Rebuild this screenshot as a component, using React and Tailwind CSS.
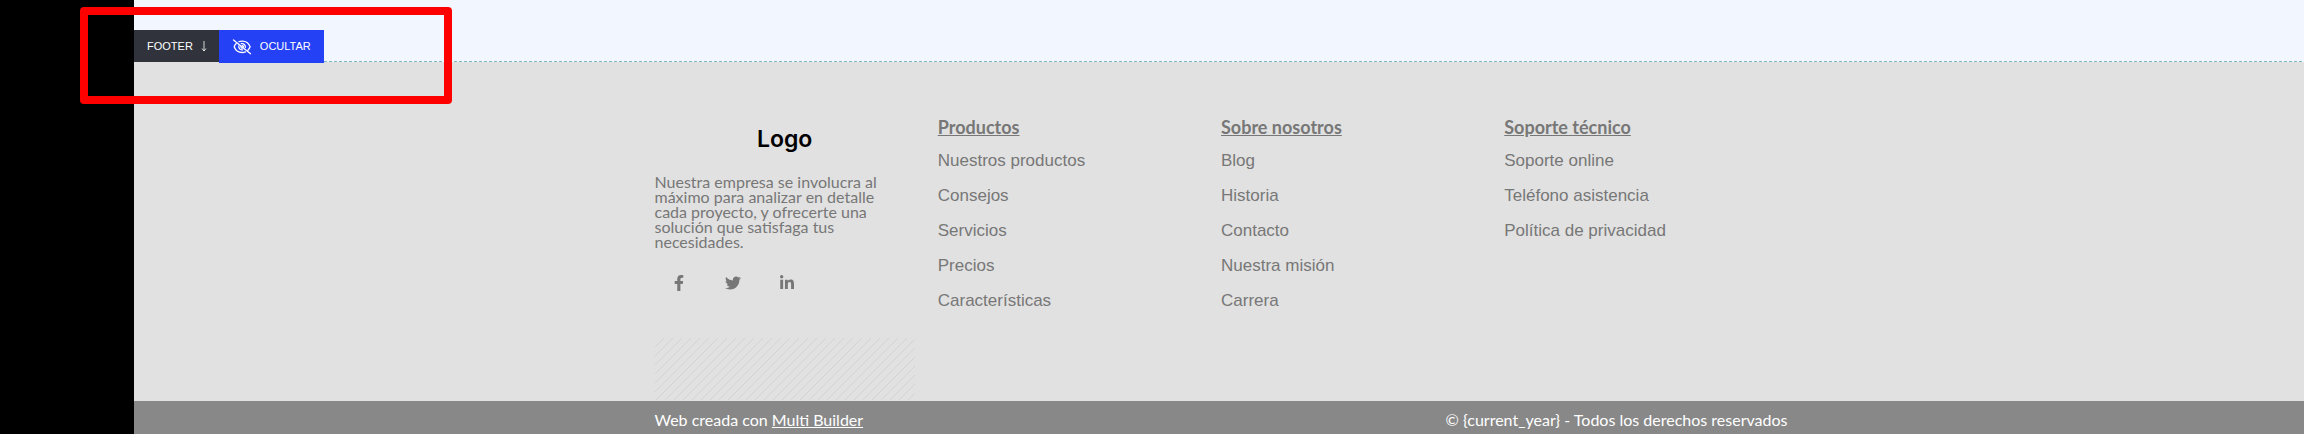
import React from 'react';
import { FaFacebookF, FaLinkedinIn, FaTwitter } from 'react-icons/fa';

const columns = [
  {
    title: 'Productos',
    links: ['Nuestros productos', 'Consejos', 'Servicios', 'Precios', 'Características']
  },
  {
    title: 'Sobre nosotros',
    links: ['Blog', 'Historia', 'Contacto', 'Nuestra misión', 'Carrera']
  },
  {
    title: 'Soporte técnico',
    links: ['Soporte online', 'Teléfono asistencia', 'Política de privacidad']
  }
];

const socials = [
  { name: 'Facebook', Icon: FaFacebookF },
  { name: 'Twitter', Icon: FaTwitter },
  { name: 'LinkedIn', Icon: FaLinkedinIn }
];

const EyeOffIcon = () => (
  <svg viewBox="0 0 20 16" className="w-5 h-4" fill="none" stroke="currentColor" strokeWidth="1.3" strokeLinecap="round" aria-hidden="true">
    <path d="M7 2.700C8 2.300 9 2.100 10.200 2.100c4.200 0 6.900 2.900 7.900 5.700-.5 1.400-1.300 2.600-2.400 3.600" />
    <path d="M4.300 4.600C3.300 5.500 2.600 6.600 2.200 7.800c1 2.900 3.900 5.700 8 5.700 1.200 0 2.300-.2 3.300-.6" />
    <path d="M9.300 4.700c2.400-.5 4.300 1.300 4 3.700M6.900 6.900c-.6 2.400 1.300 4.300 3.700 3.900" />
    <path d="M10.300 6.600c.7.100 1.200.6 1.200 1.300M8.900 8c.100.7.600 1.200 1.200 1.300" />
    <path d="M1.500 1l17 13.700" />
  </svg>
);

const SectionToolbar = () => (
  <div className="flex items-start font-['Liberation_Sans',Arial,sans-serif] text-[11px] text-white">
    <button type="button" className="flex h-8 items-center gap-2 bg-[#30333b] pl-[13px] pr-3">
      <span>FOOTER</span>
      <svg viewBox="0 0 6 12" className="h-3 w-1.5" fill="none" stroke="currentColor" strokeWidth="0.8" aria-hidden="true">
        <path d="M3 1v10M1 8.500L3 11l2-2.500" />
      </svg>
    </button>
    <button type="button" className="flex h-[33px] items-center gap-2 bg-[#2541f5] px-[13px]">
      <EyeOffIcon />
      <span>OCULTAR</span>
    </button>
  </div>
);

const LinkColumn = ({ title, links }) => (
  <nav aria-label={title} className="pt-[55px]">
    <h2 className="text-lg leading-5 font-bold underline">{title}</h2>
    <ul className="mt-3.5 flex flex-col gap-[15px] font-['Liberation_Sans',Arial,sans-serif] text-[17px] leading-5">
      {links.map((link) => (
        <li key={link}>
          <a href="#">{link}</a>
        </li>
      ))}
    </ul>
  </nav>
);

const Brand = () => (
  <div className="flex flex-col pr-[23px] pt-[63px]">
    <p className="text-center font-['Inter',sans-serif] text-[23px] leading-7 font-semibold text-black">Logo</p>
    <p className="mt-[21px] max-w-60 text-base leading-[15px]">
      Nuestra empresa se involucra al máximo para analizar en detalle cada proyecto, y ofrecerte una solución que satisfaga tus necesidades.
    </p>
    <div className="mt-[22px] flex gap-1.5">
      {socials.map(({ name, Icon }) => (
        <a key={name} href="#" aria-label={name} className="flex h-6 w-12 items-center justify-center">
          <Icon className="size-4" />
        </a>
      ))}
    </div>
    <div className="mt-[43px] h-[62px] bg-[linear-gradient(135deg,#d3d3d3_5%,transparent_5%,transparent_45%,#d3d3d3_45%,#d3d3d3_55%,transparent_55%,transparent_95%,#d3d3d3_95%)] bg-[length:9px_9px]" />
  </div>
);

const App = () => {
  return (
    <div className="relative flex min-h-screen bg-black font-['Lato',sans-serif]">
      <div className="w-[134px] shrink-0" />
      <div className="flex flex-1 flex-col bg-[#e1e1e1]">
        <div className="flex h-[62px] flex-col justify-end bg-[#f2f6ff] bg-[repeating-linear-gradient(90deg,#7db8c4_0,#7db8c4_3px,transparent_3px,transparent_5px)] bg-[length:100%_1px] bg-bottom bg-no-repeat">
          <div className="h-8">
            <SectionToolbar />
          </div>
        </div>

        <footer className="flex flex-1 flex-col text-[#777]">
          <div className="mx-auto grid w-full max-w-[1137px] flex-1 grid-cols-4 pl-1">
            <Brand />
            {columns.map((column) => (
              <LinkColumn key={column.title} {...column} />
            ))}
          </div>
          <div className="bg-[#888] text-white">
            <div className="mx-auto flex h-[33px] w-full max-w-[1137px] items-center justify-between pl-1 pt-1 text-base">
              <p>
                Web creada con <a href="#" className="underline">Multi Builder</a>
              </p>
              <p>© {'{current_year}'} - Todos los derechos reservados</p>
            </div>
          </div>
        </footer>
      </div>

      {/* highlight around the section controls */}
      <div className="pointer-events-none absolute left-20 top-[7px] h-[97px] w-[372px] rounded-sm border-8 border-[#ff0000]" />
    </div>
  );
};

export default App;
